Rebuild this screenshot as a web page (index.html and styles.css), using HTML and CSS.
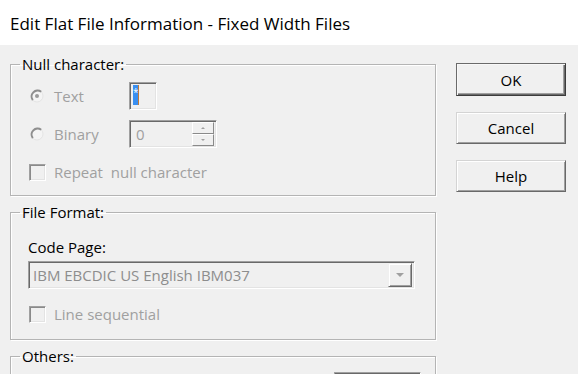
FILE: index.html
```html
<!DOCTYPE html>
<html lang="en">
<head>
    <meta charset="UTF-8">
    <title>Edit Flat File Information - Fixed Width Files</title>
    <link rel="stylesheet" href="styles.css">
</head>
<body>

<div class="titlebar">Edit Flat File Information - Fixed Width Files</div>

<div class="dialog">
    <div class="groups">

        <fieldset class="group">
            <legend>Null character:</legend>
            <div class="group-body body-null">
                <div class="row">
                    <span class="mark">
                        <svg width="14" height="14" viewBox="0 0 14 14">
                            <circle cx="7" cy="7" r="6" fill="#f4f4f4" stroke="#e4e4e4" stroke-width="1"/>
                            <path d="M2.8 11.2A6 6 0 0 1 11.2 2.8" fill="none" stroke="#8e8e8e" stroke-width="2"/>
                            <circle cx="7" cy="7" r="2" fill="#9a9a9a"/>
                        </svg>
                    </span>
                    <span class="label">Text</span>
                    <span class="edit char-edit"><span class="sel">*</span><span class="caret"></span></span>
                </div>
                <div class="row">
                    <span class="mark">
                        <svg width="14" height="14" viewBox="0 0 14 14">
                            <circle cx="7" cy="7" r="6" fill="#f4f4f4" stroke="#e4e4e4" stroke-width="1"/>
                            <path d="M2.8 11.2A6 6 0 0 1 11.2 2.8" fill="none" stroke="#8e8e8e" stroke-width="2"/>
                        </svg>
                    </span>
                    <span class="label">Binary</span>
                    <span class="edit spin">
                        <span class="spin-value">0</span>
                        <span class="spin-btns">
                            <span class="spin-btn"><span class="tri-up"></span></span>
                            <span class="spin-btn"><span class="tri-down"></span></span>
                        </span>
                    </span>
                </div>
                <div class="row">
                    <span class="mark"><span class="check"></span></span>
                    <span class="label">Repeat&nbsp; null character</span>
                </div>
            </div>
        </fieldset>

        <fieldset class="group group-next">
            <legend>File Format:</legend>
            <div class="group-body body-format">
                <div class="field-label">Code Page:</div>
                <div class="combo">
                    <span class="combo-text">IBM EBCDIC US English IBM037</span>
                    <span class="combo-btn"><span class="tri-combo"></span></span>
                </div>
                <div class="row row-seq">
                    <span class="mark"><span class="check"></span></span>
                    <span class="label">Line sequential</span>
                </div>
            </div>
        </fieldset>

        <fieldset class="group group-next">
            <legend>Others:</legend>
            <div class="group-body body-others">
                <span class="edit others-edit"></span>
            </div>
        </fieldset>

    </div>

    <div class="buttons">
        <button class="btn btn-default">OK</button>
        <button class="btn">Cancel</button>
        <button class="btn">Help</button>
    </div>
</div>

</body>
</html>
```

FILE: styles.css
```css
html,
body {
    margin: 0;
    height: 374px;
    overflow: hidden;
}

body {
    font-family: "Open Sans", "Noto Sans", sans-serif;
    font-size: 15px;
    background-color: #f0f0f0;
    color: #000;
}

.titlebar {
    height: 45px;
    box-sizing: border-box;
    padding: 2px 0 0 10px;
    background: #fff;
    font-size: 17px;
    line-height: 44px;
}

.dialog {
    display: flex;
    padding: 10px 0 0 10px;
}

.groups {
    width: 426px;
}

/* group boxes */
.group {
    margin: 0;
    padding: 0;
    border: 1px solid #b4b4b4;
    box-shadow: inset 1px 1px 0 #fff, 1px 1px 0 #fff;
}

.group-next {
    margin-top: 7px;
}

.group legend {
    margin-left: 9px;
    padding: 0 2px;
    line-height: 18px;
}

.group-body {
    padding-left: 17px;
}

.body-null {
    padding-top: 9px;
    padding-bottom: 9px;
}

.body-format {
    padding-top: 16px;
    padding-bottom: 11px;
}

.body-others {
    display: flex;
    justify-content: flex-end;
    padding: 7px 14px 0 0;
}

.row {
    display: flex;
    align-items: center;
    height: 28px;
    color: #a0a0a0;
}

.row + .row {
    margin-top: 10px;
}

.row-seq {
    margin-top: 11px;
}

.mark {
    display: flex;
    justify-content: center;
    align-items: center;
    width: 18px;
}

.mark svg {
    display: block;
}

.label {
    width: 75px;
    margin-left: 8px;
    white-space: nowrap;
}

.check {
    display: block;
    width: 17px;
    height: 17px;
    box-sizing: border-box;
    border: 1px solid;
    border-color: #a0a0a0 #fff #fff #a0a0a0;
    box-shadow: inset 1px 1px 0 #8a8a8a, inset -1px -1px 0 #e3e3e3;
    background: #f0f0f0;
}

/* sunken edit fields */
.edit {
    display: flex;
    box-sizing: border-box;
    border: 1px solid;
    border-color: #a0a0a0 #fff #fff #a0a0a0;
    box-shadow: inset 1px 1px 0 #696969, inset -1px -1px 0 #e3e3e3;
    background: #f0f0f0;
}

.char-edit {
    width: 28px;
    height: 28px;
    padding: 2px 0 0 3px;
}

.sel {
    width: 5px;
    height: 20px;
    background: #3a8ff0;
    color: #fff;
    font-size: 10px;
    line-height: 14px;
    text-align: center;
}

.caret {
    width: 1px;
    height: 20px;
    background: #c07a3a;
}

.spin {
    width: 88px;
    height: 28px;
    align-items: center;
    padding: 2px 2px 2px 6px;
}

.spin-value {
    flex: 1;
    color: #a0a0a0;
}

.spin-btns {
    display: flex;
    flex-direction: column;
    width: 22px;
    height: 24px;
}

.spin-btn {
    display: flex;
    justify-content: center;
    align-items: center;
    flex: 1;
    box-sizing: border-box;
    border: 1px solid;
    border-color: #fff #8a8a8a #8a8a8a #fff;
    background: #f0f0f0;
}

.tri-up,
.tri-down {
    width: 0;
    height: 0;
    border-left: 2px solid transparent;
    border-right: 2px solid transparent;
}

.tri-up {
    border-bottom: 2px solid #a0a0a0;
}

.tri-down {
    border-top: 2px solid #a0a0a0;
}

.field-label {
    line-height: 20px;
}

/* drop down list */
.combo {
    display: flex;
    align-items: center;
    width: 387px;
    height: 28px;
    margin-top: 4px;
    box-sizing: border-box;
    padding: 2px;
    border: 1px solid;
    border-color: #a0a0a0 #fff #fff #a0a0a0;
    box-shadow: inset 1px 1px 0 #696969, inset -1px -1px 0 #e3e3e3;
    background: #f0f0f0;
}

.combo-text {
    flex: 1;
    padding-left: 2px;
    color: #8d8d8d;
    white-space: nowrap;
}

.combo-btn {
    display: flex;
    justify-content: center;
    align-items: center;
    width: 24px;
    height: 24px;
    box-sizing: border-box;
    border: 1px solid;
    border-color: #f0f0f0 #696969 #696969 #f0f0f0;
    box-shadow: inset 1px 1px 0 #fff, inset -1px -1px 0 #a0a0a0;
    background: #f0f0f0;
}

.tri-combo {
    width: 0;
    height: 0;
    border-left: 4px solid transparent;
    border-right: 4px solid transparent;
    border-top: 4px solid #a0a0a0;
}

.others-edit {
    width: 87px;
    height: 28px;
}

/* push buttons */
.buttons {
    display: flex;
    flex-direction: column;
    gap: 16px;
    margin: 8px 0 0 20px;
}

.btn {
    width: 110px;
    height: 32px;
    padding: 0;
    font-family: inherit;
    font-size: 15px;
    color: #000;
    background: #f0f0f0;
    border: 1px solid;
    border-color: #d4d4d4 #696969 #696969 #d4d4d4;
    box-shadow: inset 1px 1px 0 #fff, inset -1px -1px 0 #a0a0a0;
}

.btn-default {
    height: 33px;
    border-color: #6a6a6a #3c3c3c #3c3c3c #6a6a6a;
    box-shadow: inset 1px 1px 0 #f8f8f8, inset -1px -1px 0 #696969, inset -2px -2px 0 #a0a0a0;
}
```
